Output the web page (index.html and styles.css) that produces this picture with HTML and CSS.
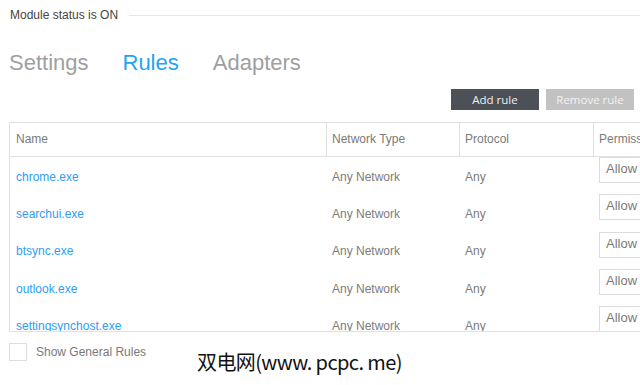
FILE: index.html
```html
<!DOCTYPE html>
<html>
<head>
<meta charset="utf-8">
<link rel="stylesheet" href="styles.css">
</head>
<body>
<div class="page">
  <div class="status">
    <span class="status-text">Module status is ON</span>
    <span class="status-line"></span>
  </div>
  <nav class="tabs">
    <span class="tab">Settings</span>
    <span class="tab active">Rules</span>
    <span class="tab">Adapters</span>
  </nav>
  <div class="actions">
    <button class="btn btn-dark">Add rule</button>
    <button class="btn btn-disabled">Remove rule</button>
  </div>
  <div class="table">
    <div class="row head">
      <div class="cell">Name</div>
      <div class="cell sep">Network Type</div>
      <div class="cell sep">Protocol</div>
      <div class="cell sep">Permission</div>
    </div>
    <div class="body">
      <div class="row">
        <div class="cell name">chrome.exe</div>
        <div class="cell">Any Network</div>
        <div class="cell">Any</div>
        <div class="cell perm"><span class="select">Allow</span></div>
      </div>
      <div class="row">
        <div class="cell name">searchui.exe</div>
        <div class="cell">Any Network</div>
        <div class="cell">Any</div>
        <div class="cell perm"><span class="select">Allow</span></div>
      </div>
      <div class="row">
        <div class="cell name">btsync.exe</div>
        <div class="cell">Any Network</div>
        <div class="cell">Any</div>
        <div class="cell perm"><span class="select">Allow</span></div>
      </div>
      <div class="row">
        <div class="cell name">outlook.exe</div>
        <div class="cell">Any Network</div>
        <div class="cell">Any</div>
        <div class="cell perm"><span class="select">Allow</span></div>
      </div>
      <div class="row">
        <div class="cell name">settingsynchost.exe</div>
        <div class="cell">Any Network</div>
        <div class="cell">Any</div>
        <div class="cell perm"><span class="select">Allow</span></div>
      </div>
    </div>
  </div>
  <div class="footer">
    <span class="checkbox"></span>
    <span class="check-label">Show General Rules</span>
  </div>
</div>
<div class="watermark">双电网(www. pcpc. me)</div>
</body>
</html>
```

FILE: styles.css
```css
html, body {
  margin: 0;
  padding: 0;
  background: #fff;
}
body {
  width: 640px;
  height: 385px;
  overflow: hidden;
  position: relative;
  font-family: "Liberation Sans", Arial, sans-serif;
}
.page {
  padding-left: 9px;
}
.status {
  display: flex;
  align-items: center;
  height: 14px;
  margin-top: 8px;
}
.status-text {
  font-size: 12px;
  color: #444;
  padding-left: 1px;
}
.status-line {
  flex: 1;
  height: 1px;
  background: #e8e8e8;
  margin-left: 11px;
}
.tabs {
  display: flex;
  gap: 34px;
  margin-top: 28px;
  height: 26px;
  line-height: 26px;
  font-size: 22px;
}
.tab {
  color: #9f9f9f;
}
.tab.active {
  color: #1ea6f2;
}
.actions {
  display: flex;
  justify-content: flex-end;
  gap: 7px;
  margin-top: 13px;
  padding-right: 6px;
}
.btn {
  width: 88px;
  height: 21px;
  border: 0;
  padding: 0;
  font-family: "Open Sans", sans-serif;
  font-size: 11.5px;
  line-height: 21px;
}
.btn-dark {
  background: #4b5157;
  color: #eef0f2;
}
.btn-disabled {
  background: #c2c2c2;
  color: #f2f2f2;
}
.table {
  margin-top: 12px;
  width: 720px;
  border: 1px solid #e0e0e0;
  border-right: 0;
}
.row {
  display: grid;
  grid-template-columns: 316px 133px 134px 136px;
}
.head {
  height: 33px;
  border-bottom: 1px solid #e0e0e0;
}
.head .cell {
  line-height: 33px;
  color: #7a7a7a;
}
.cell {
  font-size: 12px;
  color: #7c7c7c;
  padding-left: 6px;
  white-space: nowrap;
  overflow: hidden;
}
.sep {
  border-left: 1px solid #e0e0e0;
  padding-left: 5px;
}
.body {
  height: 174px;
  overflow: hidden;
}
.body .row {
  height: 37.3px;
  align-items: center;
}
.body .cell {
  padding-top: 2px;
}
.body .cell.name {
  color: #2e9ef2;
}
.body .cell.perm {
  align-self: start;
  padding-top: 0;
}
.select {
  display: block;
  width: 60px;
  height: 24px;
  line-height: 22px;
  border: 1px solid #dcdcdc;
  padding-left: 6px;
  font-size: 13px;
  color: #7a7a7a;
}
.footer {
  display: flex;
  align-items: center;
  margin-top: 11px;
}
.checkbox {
  width: 16px;
  height: 16px;
  border: 1px solid #dedede;
  background: #fff;
}
.check-label {
  margin-left: 9px;
  font-size: 12px;
  color: #7a7a7a;
}
.watermark {
  position: absolute;
  left: 197px;
  top: 349px;
  font-family: "Noto Sans CJK SC", sans-serif;
  font-size: 20px;
  line-height: 26px;
  letter-spacing: -0.6px;
  color: #111;
}
```
